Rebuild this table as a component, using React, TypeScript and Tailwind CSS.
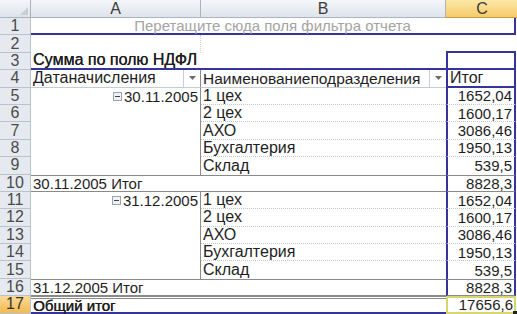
import React from "react";

const font = { fontFamily: '"Liberation Sans", Arial, sans-serif' };

function Dropdown() {
  return (
    <div className="ml-auto flex h-full w-[17px] shrink-0 items-center justify-center border-l border-[#c9ced6] bg-white">
      <svg width="7" height="4" viewBox="0 0 7 4">
        <path d="M0 0h7L3.5 4z" fill="#6b6b6b" />
      </svg>
    </div>
  );
}

function Collapse() {
  return (
    <span className="mr-[2px] inline-flex h-[9px] w-[9px] items-center justify-center border border-[#9aa3ae] bg-[#eef1f5]">
      <span className="h-px w-[5px] bg-[#444]" />
    </span>
  );
}

function RowHead({ n, active }: { n: number; active?: boolean }) {
  return (
    <div
      className={
        "flex items-center justify-center border-r border-b border-[#b9c2cd] text-[16px] " +
        (active ? "bg-gradient-to-b from-[#fbdb96] to-[#f3b94e] text-[#333]" : "bg-[#e6eaf0] text-[#4a4a4a]")
      }
    >
      {n}
    </div>
  );
}

type Item = { name: string; value: string };

const groups: { date: string; items: Item[]; total: string }[] = [
  {
    date: "30.11.2005",
    items: [
      { name: "1 цех", value: "1652,04" },
      { name: "2 цех", value: "1600,17" },
      { name: "АХО", value: "3086,46" },
      { name: "Бухгалтерия", value: "1950,13" },
      { name: "Склад", value: "539,5" },
    ],
    total: "8828,3",
  },
  {
    date: "31.12.2005",
    items: [
      { name: "1 цех", value: "1652,04" },
      { name: "2 цех", value: "1600,17" },
      { name: "АХО", value: "3086,46" },
      { name: "Бухгалтерия", value: "1950,13" },
      { name: "Склад", value: "539,5" },
    ],
    total: "8828,3",
  },
];

export default function App() {
  const blueSides = "border-x-2 border-x-[#34349a]";
  let row = 4;

  return (
    <div className="h-[314px] w-[517px] overflow-hidden bg-white text-[16px] leading-none text-[#1e1e1e]" style={font}>
      <div className="grid grid-cols-[31px_170px_245px_72px] grid-rows-[18px_repeat(17,17.4px)]">
        {/* column headers */}
        <div className="relative border-r border-b border-[#aab3bf] bg-gradient-to-b from-[#f4f6f9] to-[#dfe4ea]">
          <svg className="absolute right-[2px] bottom-[2px]" width="8" height="8" viewBox="0 0 8 8">
            <path d="M8 0v8H0z" fill="#c9cfd7" />
          </svg>
        </div>
        {["A", "B"].map((c) => (
          <div
            key={c}
            className="flex items-center justify-center border-r border-b border-[#aab3bf] bg-gradient-to-b from-[#f4f6f9] to-[#dfe4ea] text-[#3c3c3c]"
          >
            {c}
          </div>
        ))}
        <div className="flex items-center justify-center border-b border-[#c79a3a] bg-gradient-to-b from-[#fce7a8] to-[#f5cb66] text-[#3c3c3c]">
          C
        </div>

        {/* row 1: report filter drop zone */}
        <RowHead n={1} />
        <div className="col-span-3 mr-[2px] flex items-center justify-center border-r-2 border-b-2 border-[#34349a] text-[15px] text-[#a3a3a3]">
          Перетащите сюда поля фильтра отчета
        </div>

        {/* row 2 */}
        <RowHead n={2} />
        <div className="border-r border-dotted border-[#cfd5de]" />
        <div />
        <div className="mr-[2px] border-b-2 border-[#34349a]" />

        {/* row 3 */}
        <RowHead n={3} />
        <div className="col-span-2 flex items-center whitespace-nowrap border-b-2 border-[#34349a] pl-[2px] [text-shadow:0.3px_0_0_#1e1e1e]">
          Сумма по полю НДФЛ
        </div>
        <div className={"mr-[2px] border-b-2 border-b-[#34349a] " + blueSides} />

        {/* row 4: field headers */}
        <RowHead n={4} />
        <div className="flex items-center border-r border-b border-r-[#8c8c8c] border-b-[#c6ccd4] pl-[2px]">
          Датаначисления
          <Dropdown />
        </div>
        <div className="flex items-center border-b border-[#c6ccd4] pl-[2px] text-[15.5px]">
          Наименованиеподразделения
          <Dropdown />
        </div>
        <div className={"mr-[2px] flex items-center border-b-2 border-b-[#34349a] pl-[2px] " + blueSides}>Итог</div>

        {groups.map((g) => {
          const cells: React.ReactNode[] = [];
          g.items.forEach((it, i) => {
            row += 1;
            const last = i === g.items.length - 1;
            cells.push(
              <RowHead key={"h" + row} n={row} />,
              <div key={"a" + row} className="flex items-center justify-end border-r border-[#8c8c8c] pr-[2px] text-[15px]">
                {i === 0 && (
                  <>
                    <Collapse />
                    {g.date}
                  </>
                )}
              </div>,
              <div
                key={"b" + row}
                className={"flex items-center pl-[2px] " + (last ? "" : "border-b border-dotted border-[#c3c9d2]")}
              >
                {it.name}
              </div>,
              <div
                key={"c" + row}
                className={
                  "mr-[2px] flex items-center justify-end pr-[2px] text-[15px] " +
                  blueSides +
                  (last ? "" : " border-b border-b-[#c3c9d2] [border-bottom-style:dotted]")
                }
              >
                {it.value}
              </div>
            );
          });
          row += 1;
          cells.push(
            <RowHead key={"h" + row} n={row} />,
            <div key={"s" + row} className="col-span-2 flex items-center border-y border-[#8a8a8a] pl-[2px] text-[15px]">
              {g.date} Итог
            </div>,
            <div
              key={"t" + row}
              className={"mr-[2px] flex items-center justify-end border-y border-y-[#8a8a8a] pr-[2px] text-[15px] " + blueSides}
            >
              {g.total}
            </div>
          );
          return cells;
        })}

        {/* row 17: grand total */}
        <RowHead n={17} active />
        <div className="col-span-2 flex items-center border-t-[3px] border-b-2 border-double border-t-[#8a8a8a] border-b-[#34349a] pl-[2px] text-[15px] [text-shadow:0.4px_0_0_#1e1e1e]">
          Общий итог
        </div>
        <div className="relative mr-[2px] flex items-center justify-end border-2 border-[#d9d66e] pr-[1px] text-[15px]">
          17656,6
          <span className="absolute -right-[3px] -bottom-[3px] h-[4px] w-[4px] bg-[#222]" />
        </div>
      </div>
    </div>
  );
}
